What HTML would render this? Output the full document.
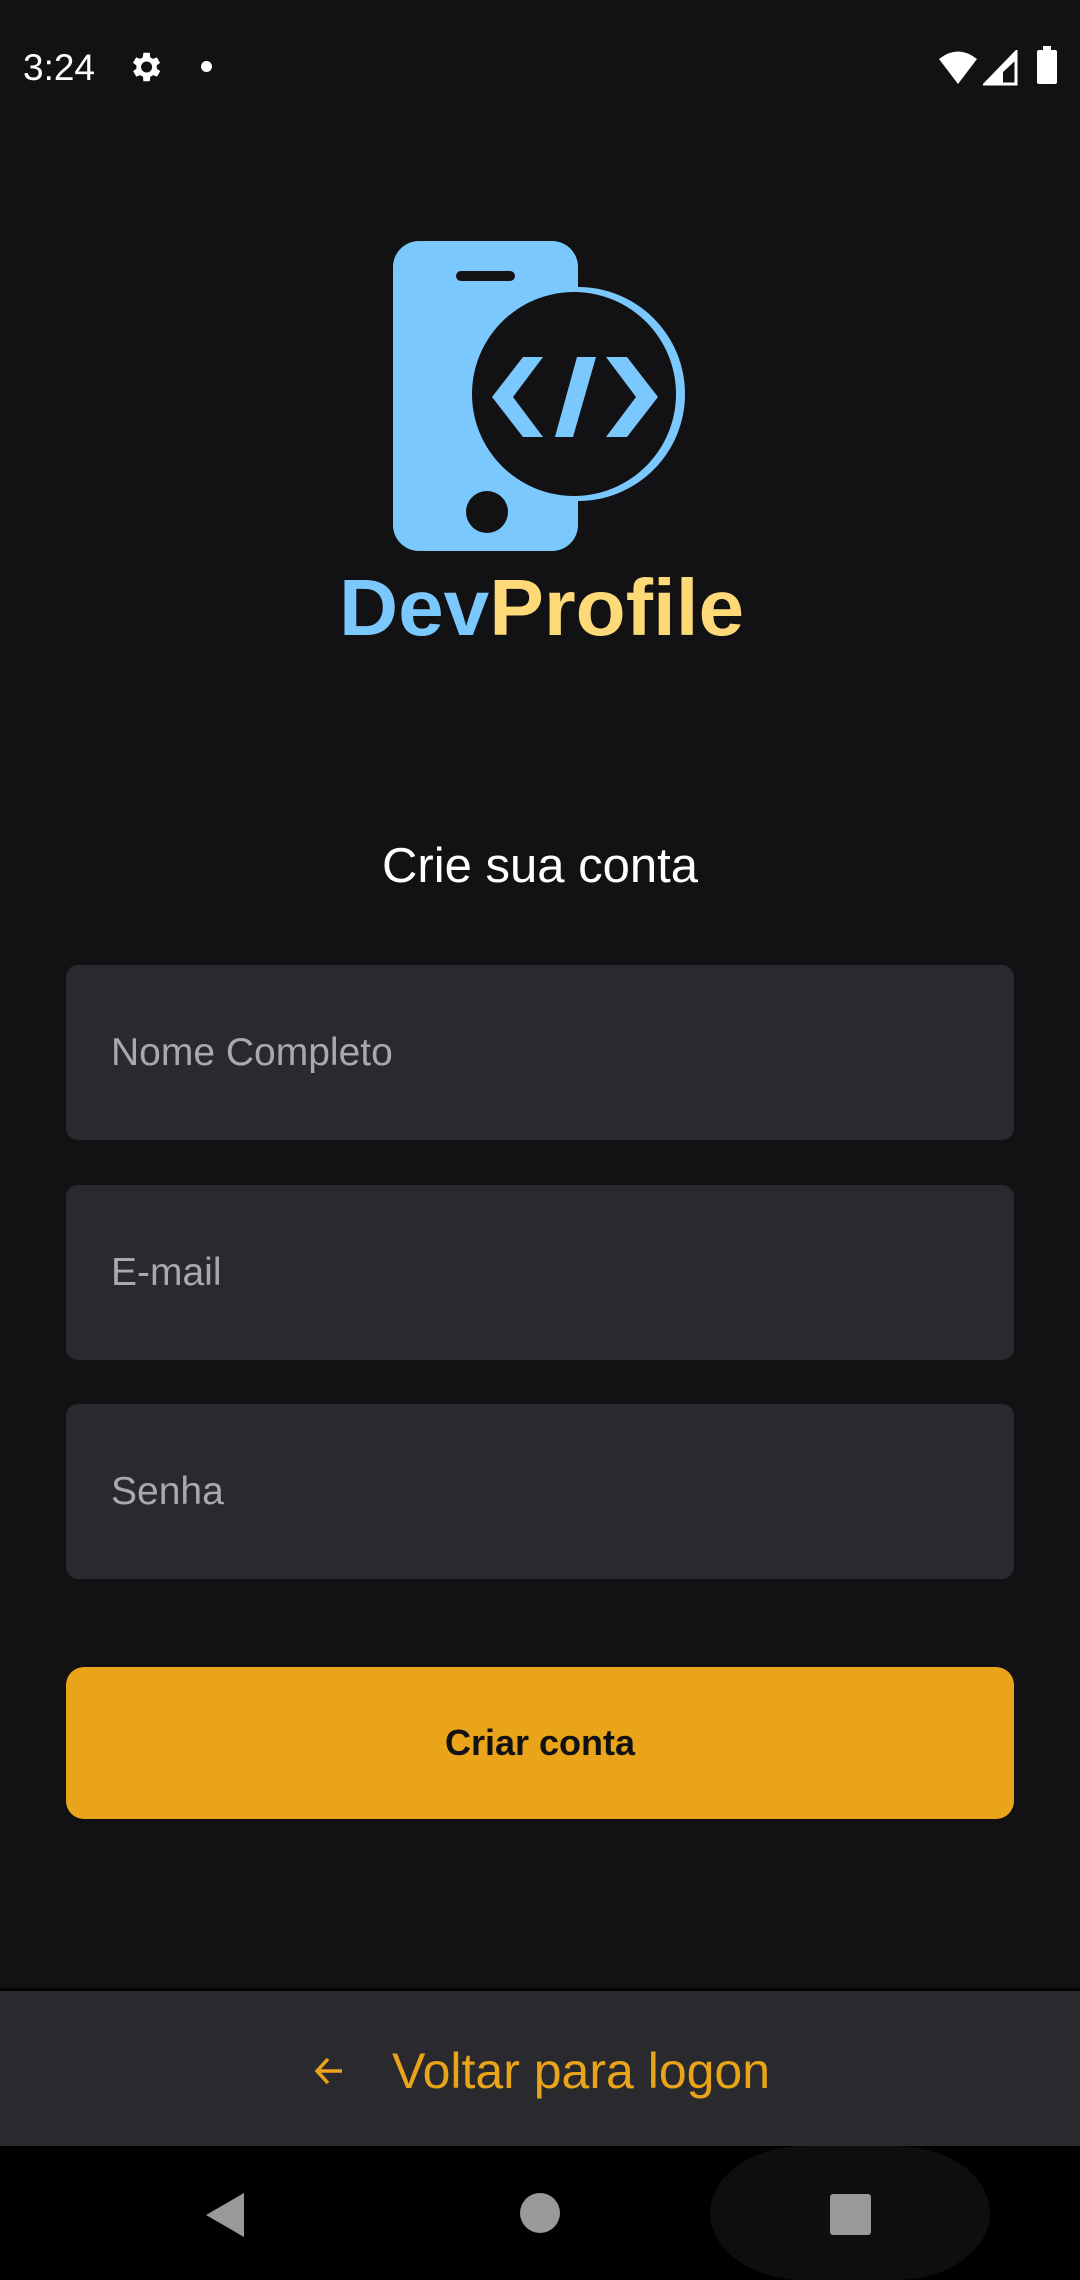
<!DOCTYPE html>
<html><head><meta charset="utf-8">
<style>
*{margin:0;padding:0;box-sizing:border-box}
html,body{width:1080px;height:2280px;background:#121214;overflow:hidden;font-family:"Liberation Sans",sans-serif}
.abs{position:absolute}
.input{position:absolute;left:66px;width:948px;height:175px;background:#29292e;border-radius:12px;color:#a8a8b3;font-size:39px;padding-left:45px;line-height:175px}
</style></head><body>
<!-- status bar -->
<div class="abs" style="left:23px;top:47px;color:#fff;font-size:37px">3:24</div>
<svg class="abs" style="left:126px;top:48px" width="38" height="38" viewBox="0 0 24 24"><path fill="#fff" d="M19.4 13a7.5 7.5 0 000-2l2.1-1.6-2-3.5-2.5 1a7 7 0 00-1.7-1L15 3h-4l-.4 2.9a7 7 0 00-1.7 1l-2.5-1-2 3.5L6.6 11a7.5 7.5 0 000 2l-2.1 1.6 2 3.5 2.5-1a7 7 0 001.7 1L11 21h4l.4-2.9a7 7 0 001.7-1l2.5 1 2-3.5zM13 15.5A3.5 3.5 0 1113 8.5a3.5 3.5 0 010 7z"/></svg>
<div class="abs" style="left:201px;top:61px;width:11px;height:11px;border-radius:50%;background:#fff"></div>
<svg class="abs" style="left:938px;top:50px" width="40" height="36" viewBox="0 0 40 36"><path fill="#fff" d="M20 34L1 9Q20-6 39 9Z"/></svg>
<svg class="abs" style="left:983px;top:50px" width="35" height="36" viewBox="0 0 35 36"><path fill="none" stroke="#fff" stroke-width="3" d="M2 34L33 2V34Z"/><path fill="#fff" d="M2 34L33 2V10L20 22V34Z"/></svg>
<div class="abs" style="left:1037px;top:50px;width:20px;height:34px;background:#fff;border-radius:2px"></div>
<div class="abs" style="left:1043px;top:46px;width:8px;height:5px;background:#fff"></div>

<!-- logo -->
<svg class="abs" style="left:0;top:0" width="1080" height="700" viewBox="0 0 1080 700">
<rect x="393" y="241" width="185" height="310" rx="26" fill="#7ac8fd"/>
<rect x="456" y="271" width="59" height="10" rx="5" fill="#121214"/>
<circle cx="487" cy="512" r="21" fill="#121214"/>
<circle cx="578" cy="394" r="107" fill="#7ac8fd"/>
<circle cx="574" cy="394" r="102" fill="#121214"/>
<path fill="#7ac8fd" d="M523 357h20l-30 40 30 40h-20l-31-40z"/>
<path fill="#7ac8fd" d="M606 357h21l31 40-31 40h-21l30-40z"/>
<path fill="#7ac8fd" d="M577 357h19l-23 80h-18z"/>
<text x="339" y="635" font-family="Liberation Sans,sans-serif" font-weight="bold" font-size="80" textLength="405" lengthAdjust="spacingAndGlyphs" fill="#7ac8fd">Dev<tspan fill="#fdd978">Profile</tspan></text>
</svg>

<div class="abs" style="left:0;width:1080px;top:838px;text-align:center;color:#fff;font-size:49px">Crie sua conta</div>

<div class="input" style="top:965px">Nome Completo</div>
<div class="input" style="top:1185px">E-mail</div>
<div class="input" style="top:1404px">Senha</div>

<div class="abs" style="left:66px;top:1667px;width:948px;height:152px;background:#e9a419;border-radius:18px;text-align:center;line-height:152px;font-weight:bold;font-size:36px;color:#121214">Criar conta</div>

<div class="abs" style="left:0;top:1988px;width:1080px;height:3px;background:#000"></div>
<div class="abs" style="left:0;top:1991px;width:1080px;height:155px;background:#29292e"></div>
<svg class="abs" style="left:312px;top:2056px" width="34" height="30" viewBox="0 0 34 30"><path fill="none" stroke="#e9a419" stroke-width="3.5" d="M30 15H6M16 3L5 15l11 12"/></svg>
<div class="abs" style="left:392px;top:2042px;color:#e9a419;font-size:50px">Voltar para logon</div>

<div class="abs" style="left:0;top:2146px;width:1080px;height:134px;background:#000"></div>
<div class="abs" style="left:710px;top:2146px;width:280px;height:134px;background:#0e0e0e;border-radius:140px/100px"></div>
<svg class="abs" style="left:204px;top:2192px" width="42" height="46" viewBox="0 0 42 46"><path fill="#999" d="M40 1V45L2 23Z"/></svg>
<div class="abs" style="left:520px;top:2193px;width:40px;height:40px;border-radius:50%;background:#999"></div>
<div class="abs" style="left:830px;top:2194px;width:41px;height:41px;border-radius:3px;background:#999"></div>
</body></html>
